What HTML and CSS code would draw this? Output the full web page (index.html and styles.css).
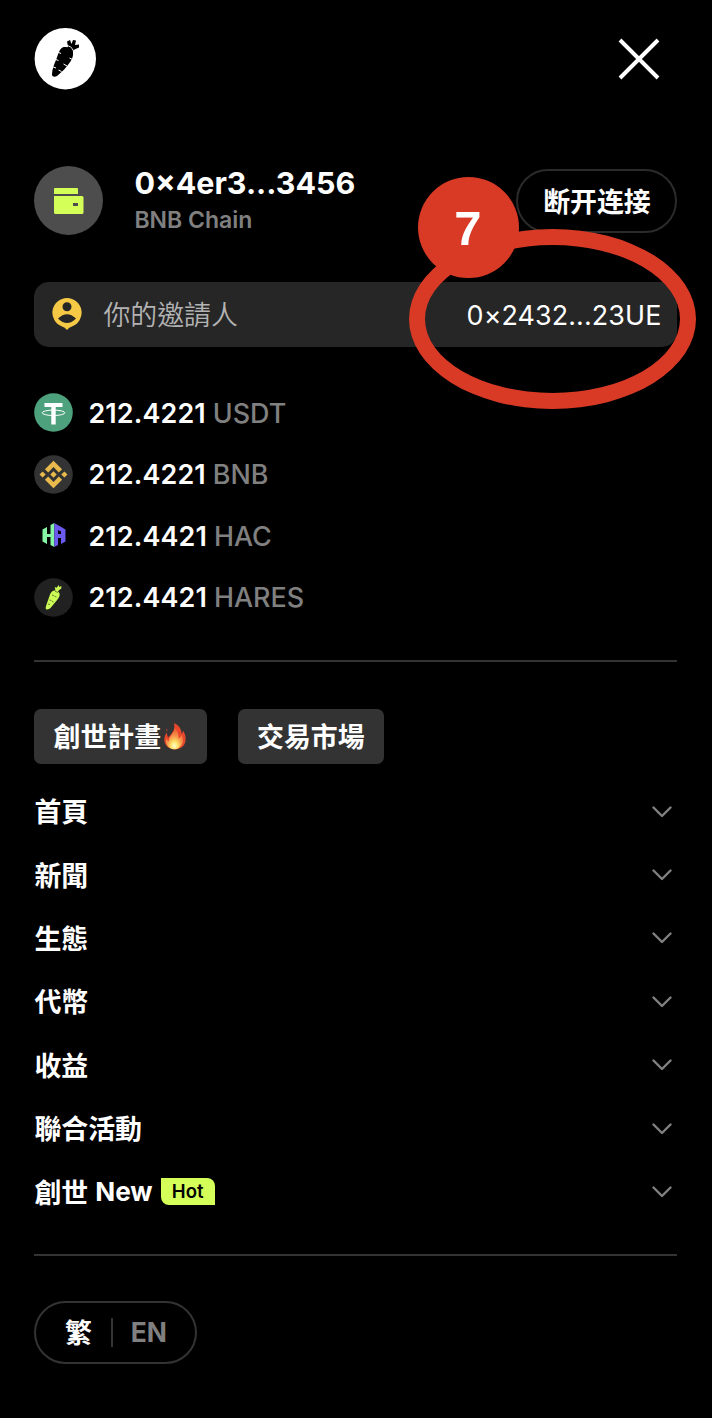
FILE: index.html
```html
<!DOCTYPE html>
<html lang="zh-Hant">
<head>
    <meta charset="UTF-8">
    <title>HARES Menu</title>
    <link rel="stylesheet" href="styles.css">
</head>
<body>
    <div class="menu">
        <header class="header">
            <a class="logo" href="#">
                <svg width="62" height="62" viewBox="0 0 62 62">
                    <circle cx="31.300" cy="30.700" r="30.700" fill="#fff"/>
                    <path d="M28.500 19.500c4-1.500 10 1 10.500 5 .4 3-.5 6-2.500 9-4 6-9 11-13.500 14.500-2 1.200-5 1-5-1.500 0-5 2-10 4-14.500l2.500-7c1-2.500 2-4.500 4-5.500z" fill="#000"/>
                    <path d="M33 20l1-1.500-1-5 3-1.500 1.500 4 1.500-4 3 .5-1 4.500 4-.5v3l-4.500 2-2 2.500z" fill="#000"/>
                    <path d="M31.500 17.500q6 0 8 5.500M23.500 24l3.500 1.500M39.500 32l-4-2M20.500 31l4 1.500M33 38l-3.500-2M18 38.500l4 1.500M27.500 43.500l-3-1.500" fill="none" stroke="#fff" stroke-width="1"/>
                </svg>
            </a>
            <button class="close" aria-label="Close">
                <svg width="42" height="42" viewBox="0 0 42 42">
                    <path d="M2 2L40 40M40 2L2 40" stroke="#fff" stroke-width="3.900" fill="none"/>
                </svg>
            </button>
        </header>

        <section class="account">
            <div class="avatar">
                <svg width="30" height="28" viewBox="0 0 30 28">
                    <path d="M1 1h22q1 0 1 1v5H0V2q0-1 1-1zM0 9h28q1.500 0 1.500 1.500v15q0 1.500-1.500 1.500H1.500Q0 27 0 25.500zM19 16v3h5v-3z" fill="#d4ff59" fill-rule="evenodd"/>
                </svg>
            </div>
            <div class="account-info">
                <div class="address">0×4er3...3456</div>
                <div class="chain">BNB Chain</div>
            </div>
            <button class="disconnect" lang="zh-Hans">断开连接</button>
        </section>

        <section class="inviter">
            <svg width="30" height="32" viewBox="0 0 30 32">
                <path d="M15 0a14.700 14.700 0 0 1 5 28.500Q17 29 15 32Q13 29 10 28.500A14.700 14.700 0 0 1 15 0zM15 4.200a4.500 4.500 0 1 0 0 9a4.500 4.500 0 1 0 0-9zM6 20.500Q15 29.500 24 20.500Q15 12 6 20.500z" fill="#f5c945" fill-rule="evenodd"/>
            </svg>
            <span class="inviter-label">你的邀請人</span>
            <span class="inviter-address">0×2432...23UE</span>
        </section>

        <ul class="tokens">
            <li>
                <svg width="39" height="39" viewBox="0 0 39 39">
                    <circle cx="19.500" cy="19.500" r="19.300" fill="#4ea17d"/>
                    <path d="M10.500 10h18v4h-6.800v17.500h-4.400V14h-6.800z" fill="#fff"/>
                    <ellipse cx="19.500" cy="19.800" rx="11.300" ry="2.700" fill="none" stroke="#fff" stroke-width="1"/>
                </svg>
                <span class="amount">212.4221</span>
                <span class="symbol">USDT</span>
            </li>
            <li>
                <svg width="39" height="39" viewBox="0 0 39 39">
                    <circle cx="19.500" cy="19.500" r="19.300" fill="#333"/>
                    <path d="M19.500 5.700l8.600 8.500-3.300 3.200-5.300-5.300-5.300 5.300-3.300-3.200zM19.500 33.300l8.600-8.500-3.300-3.200-5.300 5.300-5.300-5.300-3.300 3.200zM19.500 16.300l3.200 3.200-3.200 3.200-3.200-3.200zM8.600 16.400l3.100 3.100-3.100 3.100-3.100-3.100zM30.400 16.400l3.100 3.100-3.100 3.100-3.100-3.100z" fill="#e8b94c"/>
                </svg>
                <span class="amount">212.4221</span>
                <span class="symbol">BNB</span>
            </li>
            <li>
                <svg width="39" height="39" viewBox="0 0 39 39">
                    <path d="M8.500 13.500l4.500-2.500v7h3.500V9L20.300 7v24l-3.800-2v-8H13v7l-4.500-2.500z" fill="#85f5a5"/>
                    <path d="M20.300 7l11.200 6.500v12L27 28v-6h-3v7l-3.700 2zM24 14v4h3v-2.500z" fill="#6a5aed" fill-rule="evenodd"/>
                </svg>
                <span class="amount">212.4421</span>
                <span class="symbol">HAC</span>
            </li>
            <li>
                <svg width="39" height="39" viewBox="0 0 39 39">
                    <circle cx="19.500" cy="19.500" r="19.300" fill="#212121"/>
                    <path d="M18 13.500c2-2 6.500-1 7.500 2 .6 2-.5 4-2 6l-7 8.500c-1.500 1.500-4.500 2-4.800.4-.2-1 .5-3 1-4.500l2.800-8c.6-2 1.300-3.200 2.500-4.400z" fill="#cdfb55"/>
                    <path d="M21.500 13l-.7-4 2 .8 1.700-2.800.9 2 2-1-.2 2.700-2.200 1.300-1 1.800z" fill="#cdfb55"/>
                    <path d="M18 17l2 .8M22.500 19l-2-.7M15.500 22l2 .5M19.500 24l-1.500-.8M14 26l2 .5M21 13.200l3 1.300" stroke="#53642c" stroke-width=".8"/>
                </svg>
                <span class="amount">212.4421</span>
                <span class="symbol">HARES</span>
            </li>
        </ul>

        <div class="shortcuts">
            <a class="shortcut" href="#">創世計畫<svg width="27" height="28" viewBox="0 0 27 28">
                    <defs>
                        <radialGradient id="flame" cx=".5" cy=".85" r=".8">
                            <stop offset="0" stop-color="#fffbd0"/>
                            <stop offset=".25" stop-color="#ffe267"/>
                            <stop offset=".5" stop-color="#f9a04e"/>
                            <stop offset="1" stop-color="#e8512f"/>
                        </radialGradient>
                    </defs>
                    <path d="M13 1c5 2 8 7 7.500 11 1-.7 1.400-2 1.500-3.500 2 3 3 6 2.500 10C24 24 19.500 27.500 14 27.500S4 24 3.300 18.500C3 15 4.500 13 5.500 10.500l1.500 5c2-2 4-4 5.500-7C13.500 6 13.600 3.500 13 1z" fill="#e9482c"/>
                    <path d="M14 5c2 4 4 7 3.500 11.500 1.500-.7 2.500-2 3.200-3.500 1.500 4 2 7-.5 10.500-1.600 2.300-4 3.700-6.200 3.700-4 0-7.500-2-8.800-6-.4-1.700-.4-3 0-4.700 1 1.500 1.500 2.500 2.500 3C8 14 13.500 11 14 5z" fill="url(#flame)"/>
                    <path d="M5.500 6.500q1.500 1.500.5 3-1-1-.5-3z" fill="#e9482c"/>
                </svg></a>
            <a class="shortcut" href="#">交易市場</a>
        </div>

        <nav class="nav">
            <a href="#">首頁<svg class="chevron" viewBox="0 0 20 12"><path d="M1.500 1.500L10 10l8.500-8.500"/></svg></a>
            <a href="#">新聞<svg class="chevron" viewBox="0 0 20 12"><path d="M1.500 1.500L10 10l8.500-8.500"/></svg></a>
            <a href="#">生態<svg class="chevron" viewBox="0 0 20 12"><path d="M1.500 1.500L10 10l8.500-8.500"/></svg></a>
            <a href="#">代幣<svg class="chevron" viewBox="0 0 20 12"><path d="M1.500 1.500L10 10l8.500-8.500"/></svg></a>
            <a href="#">收益<svg class="chevron" viewBox="0 0 20 12"><path d="M1.500 1.500L10 10l8.500-8.500"/></svg></a>
            <a href="#">聯合活動<svg class="chevron" viewBox="0 0 20 12"><path d="M1.500 1.500L10 10l8.500-8.500"/></svg></a>
            <a href="#">創世 <span class="new">New</span><span class="hot">Hot</span><svg class="chevron" viewBox="0 0 20 12"><path d="M1.500 1.500L10 10l8.500-8.500"/></svg></a>
        </nav>

        <div class="language">
            <span class="lang-active">繁</span>
            <span class="lang-divider"></span>
            <span class="lang-other">EN</span>
        </div>

        <!-- step marker over the inviter address -->
        <div class="marker-ring"></div>
        <div class="marker-number">7</div>
    </div>
</body>
</html>
```

FILE: styles.css
```css
* {
    box-sizing: border-box;
}
body {
    margin: 0;
    background-color: #000;
    color: #fff;
    font-family: Inter, "Noto Sans CJK TC", sans-serif;
}
a {
    color: inherit;
    text-decoration: none;
}
button {
    padding: 0;
    background: none;
    border: none;
    color: inherit;
    font-family: inherit;
}
svg {
    display: block;
    flex-shrink: 0;
}
.menu {
    position: relative;
    width: 712px;
    height: 1418px;
    padding: 27.6px 34.6px 0 34.4px;
    overflow: hidden;
}
.header {
    display: flex;
    justify-content: space-between;
    align-items: center;
    height: 62px;
    padding-right: 17px;
}
.account {
    display: flex;
    align-items: center;
    height: 69px;
    margin-top: 76.8px;
}
.avatar {
    display: flex;
    align-items: center;
    justify-content: center;
    width: 69px;
    height: 69px;
    border-radius: 50%;
    background-color: #4d4d4d;
}
.account-info {
    margin-left: 31px;
    padding-top: 2px;
}
.address {
    font-size: 30.5px;
    font-weight: 700;
    line-height: 38px;
}
.chain {
    color: #808080;
    font-size: 23px;
    font-weight: 600;
    line-height: 37px;
}
.disconnect {
    width: 161px;
    height: 63.5px;
    margin-left: auto;
    border: 2px solid #2b2b2b;
    border-radius: 32px;
    font-family: Inter, "Noto Sans CJK SC", sans-serif;
    font-size: 26.9px;
    font-weight: 600;
}
.inviter {
    display: flex;
    align-items: center;
    height: 65.5px;
    margin-top: 46.2px;
    padding: 0 16px 0 18px;
    border-radius: 15px;
    background-color: #262626;
    font-size: 26.9px;
}
.inviter-label {
    margin-left: 21px;
    padding-bottom: 2px;
    color: #b3b3b3;
    font-weight: 350;
}
.inviter-address {
    margin-left: auto;
    padding-top: 1px;
    letter-spacing: .1px;
}
.tokens {
    display: flex;
    flex-direction: column;
    gap: 22.5px;
    margin: 46px 0 0;
    padding: 0 0 43px;
    border-bottom: 2px solid #333;
    list-style: none;
}
.tokens li {
    display: flex;
    align-items: center;
    height: 39px;
    font-size: 26.9px;
    font-weight: 500;
}
.amount {
    margin-left: 15px;
    font-weight: 600;
    letter-spacing: .15px;
}
.symbol {
    margin-left: 7px;
    color: #808080;
    font-weight: 550;
}
.shortcuts {
    display: flex;
    gap: 30.5px;
    margin-top: 47px;
}
.shortcut {
    display: flex;
    align-items: center;
    height: 55.5px;
    padding: 0 19.2px 1px;
    border-radius: 7px;
    background-color: #333;
    font-size: 26.9px;
    font-weight: 600;
}
.nav {
    display: flex;
    flex-direction: column;
    margin-top: 16px;
    padding-bottom: 30px;
    border-bottom: 2px solid #333;
}
.nav a {
    display: flex;
    align-items: center;
    height: 63.45px;
    padding: 0 5px 2.4px 0;
    font-size: 26.9px;
    font-weight: 600;
}
.chevron {
    width: 20px;
    height: 12px;
    margin: 2px 0 0 auto;
    fill: none;
    stroke: #808080;
    stroke-width: 2.4;
    stroke-linecap: round;
    stroke-linejoin: round;
}
.new {
    margin-left: 7px;
    font-size: 26.2px;
    font-weight: 700;
}
.hot {
    width: 54px;
    height: 27px;
    margin-left: 8px;
    border-radius: 0 8px 0 8px;
    background-color: #d4ff59;
    color: #000;
    font-size: 18.6px;
    font-weight: 600;
    line-height: 26px;
    text-align: center;
}
.language {
    display: flex;
    align-items: center;
    width: 163px;
    height: 63.5px;
    margin-top: 44.5px;
    padding-left: 28.5px;
    border: 2px solid #333;
    border-radius: 32px;
    font-size: 26.9px;
    font-weight: 700;
}
.lang-active {
    padding-bottom: 2px;
}
.lang-divider {
    width: 2px;
    height: 29px;
    margin: 0 18px 0 19px;
    background-color: #333;
}
.lang-other {
    color: #808080;
    font-size: 26.4px;
    font-weight: 700;
}
.marker-ring {
    position: absolute;
    top: 228.5px;
    left: 409px;
    width: 287px;
    height: 180px;
    border: 16px solid #d93a26;
    border-radius: 50%;
}
.marker-number {
    position: absolute;
    top: 177px;
    left: 417.5px;
    width: 101px;
    height: 101px;
    border-radius: 50%;
    background-color: #d93a26;
    font-family: "Liberation Sans", Arial, sans-serif;
    font-size: 49px;
    font-weight: bold;
    line-height: 103px;
    text-align: center;
}
```
